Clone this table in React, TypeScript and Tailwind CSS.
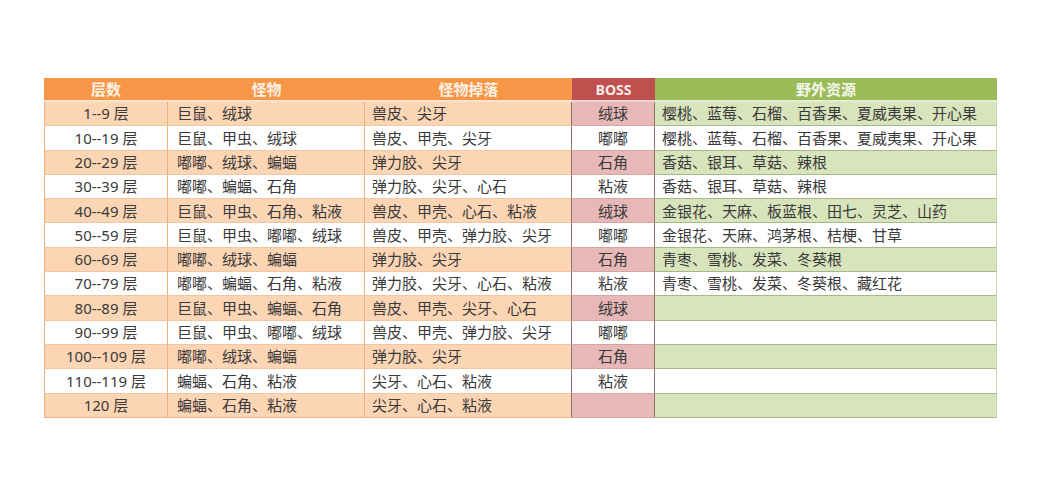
import React from "react";

type Row = {
  floor: string;
  monsters: string;
  drops: string;
  boss: string;
  wild: string;
};

const rows: Row[] = [
  { floor: "1--9 层", monsters: "巨鼠、绒球", drops: "兽皮、尖牙", boss: "绒球", wild: "樱桃、蓝莓、石榴、百香果、夏威夷果、开心果" },
  { floor: "10--19 层", monsters: "巨鼠、甲虫、绒球", drops: "兽皮、甲壳、尖牙", boss: "嘟嘟", wild: "樱桃、蓝莓、石榴、百香果、夏威夷果、开心果" },
  { floor: "20--29 层", monsters: "嘟嘟、绒球、蝙蝠", drops: "弹力胶、尖牙", boss: "石角", wild: "香菇、银耳、草菇、辣根" },
  { floor: "30--39 层", monsters: "嘟嘟、蝙蝠、石角", drops: "弹力胶、尖牙、心石", boss: "粘液", wild: "香菇、银耳、草菇、辣根" },
  { floor: "40--49 层", monsters: "巨鼠、甲虫、石角、粘液", drops: "兽皮、甲壳、心石、粘液", boss: "绒球", wild: "金银花、天麻、板蓝根、田七、灵芝、山药" },
  { floor: "50--59 层", monsters: "巨鼠、甲虫、嘟嘟、绒球", drops: "兽皮、甲壳、弹力胶、尖牙", boss: "嘟嘟", wild: "金银花、天麻、鸿茅根、桔梗、甘草" },
  { floor: "60--69 层", monsters: "嘟嘟、绒球、蝙蝠", drops: "弹力胶、尖牙", boss: "石角", wild: "青枣、雪桃、发菜、冬葵根" },
  { floor: "70--79 层", monsters: "嘟嘟、蝙蝠、石角、粘液", drops: "弹力胶、尖牙、心石、粘液", boss: "粘液", wild: "青枣、雪桃、发菜、冬葵根、藏红花" },
  { floor: "80--89 层", monsters: "巨鼠、甲虫、蝙蝠、石角", drops: "兽皮、甲壳、尖牙、心石", boss: "绒球", wild: "" },
  { floor: "90--99 层", monsters: "巨鼠、甲虫、嘟嘟、绒球", drops: "兽皮、甲壳、弹力胶、尖牙", boss: "嘟嘟", wild: "" },
  { floor: "100--109 层", monsters: "嘟嘟、绒球、蝙蝠", drops: "弹力胶、尖牙", boss: "石角", wild: "" },
  { floor: "110--119 层", monsters: "蝙蝠、石角、粘液", drops: "尖牙、心石、粘液", boss: "粘液", wild: "" },
  { floor: "120 层", monsters: "蝙蝠、石角、粘液", drops: "尖牙、心石、粘液", boss: "", wild: "" },
];

export default function App() {
  return (
    <div className="w-full h-[500px] bg-white pt-[78px] pl-[44px] font-['Noto_Sans','Noto_Sans_CJK_SC',sans-serif] text-[15px] text-[#3a3a3a]">
      <div className="grid grid-cols-[124px_197px_207px_83px_342px] w-[953px]">
        {/* 表头 */}
        <div className="h-[24px] bg-[#f79646] border-b-2 border-[#fbe3cf] flex items-center justify-center text-[#fdf0e4] font-bold">层数</div>
        <div className="h-[24px] bg-[#f79646] border-b-2 border-[#fbe3cf] flex items-center justify-center text-[#fdf0e4] font-bold">怪物</div>
        <div className="h-[24px] bg-[#f79646] border-b-2 border-[#fbe3cf] flex items-center justify-center text-[#fdf0e4] font-bold">怪物掉落</div>
        <div className="h-[24px] bg-[#c0504d] border-b-2 border-[#f0d6d5] flex items-center justify-center text-[#fbeaea] font-bold text-[14px] font-['Open_Sans',sans-serif]">BOSS</div>
        <div className="h-[24px] bg-[#9bbb59] border-b-2 border-[#e4ecd3] flex items-center justify-center text-[#f4f8ec] font-bold">野外资源</div>

        {rows.map((r, i) => {
          const odd = i % 2 === 0;
          const last = i === rows.length - 1;
          return (
            <React.Fragment key={i}>
              <div className={`h-[24.3px] flex items-center justify-center border-l border-r border-[#efb07e] ${odd ? "bg-[#fcd5b4]" : "bg-white"} ${last ? "border-b border-b-[#efb07e]" : "border-b border-b-[#f2c6a2]"}`}>
                {r.floor}
              </div>
              <div className={`h-[24.3px] flex items-center pl-[9px] border-r border-[#efb07e] ${odd ? "bg-[#fcd5b4]" : "bg-white"} ${last ? "border-b border-b-[#efb07e]" : "border-b border-b-[#f2c6a2]"}`}>
                {r.monsters}
              </div>
              <div className={`h-[24.3px] flex items-center pl-[7px] border-r border-[#8e6f6a] ${odd ? "bg-[#fcd5b4]" : "bg-white"} ${last ? "border-b border-b-[#efb07e]" : "border-b border-b-[#f2c6a2]"}`}>
                {r.drops}
              </div>
              <div className={`h-[24.3px] flex items-center justify-center border-r border-[#8e6f6a] ${odd ? "bg-[#e6b8b7]" : "bg-white"} border-b border-b-[#d9a3a2]`}>
                {r.boss}
              </div>
              <div className={`h-[24.3px] flex items-center pl-[7px] border-r border-[#c8d6a8] ${odd ? "bg-[#d8e4bc]" : "bg-white"} border-b border-b-[#a8b88a]`}>
                {r.wild}
              </div>
            </React.Fragment>
          );
        })}
      </div>
    </div>
  );
}
